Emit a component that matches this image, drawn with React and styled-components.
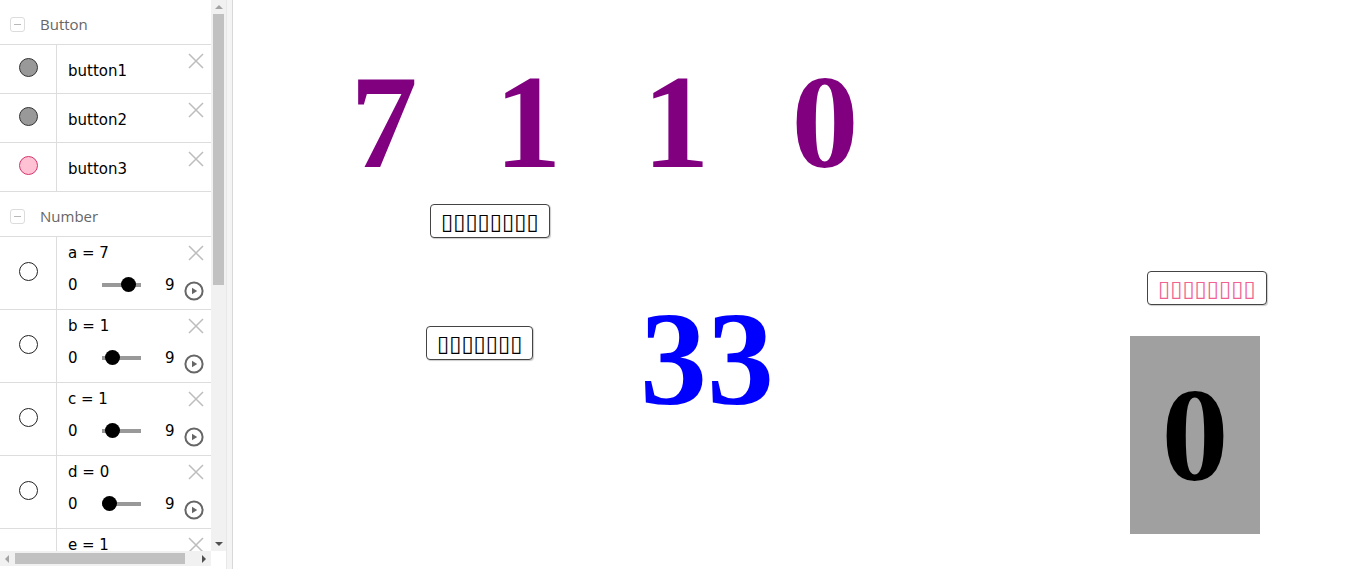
import React from 'react';
import styled, { createGlobalStyle } from 'styled-components';

const GlobalStyle = createGlobalStyle`
  html, body {
    margin: 0;
    padding: 0;
    background: #fff;
    overflow: hidden;
  }
  body {
    font-family: "DejaVu Sans", sans-serif;
    color: #000;
  }
`;

const PANEL_W = 233;

// Layout
const Page = styled.div`
  display: flex;
  width: 1352px;
  height: 569px;
`;

const Panel = styled.div`
  display: flex;
  flex: none;
  height: 100%;
`;

const ListArea = styled.div`
  display: grid;
  grid-template-columns: 211px 15px;
  grid-template-rows: 551px 15px;
  width: 226px;
`;

const ListClip = styled.div`
  overflow: hidden;
`;

const Splitter = styled.div`
  width: 5px;
  background: #f4f4f4;
  border-left: 1px solid #e8e8e8;
  border-right: 1px solid #d8d8d8;
`;

// Scrollbars
const VScroll = styled.div`
  display: flex;
  flex-direction: column;
  background: #f1f1f1;
`;

const HScroll = styled.div`
  display: flex;
  background: #f1f1f1;
`;

const Corner = styled.div`
  background: #fff;
`;

const ArrowCell = styled.div`
  flex: none;
  width: ${p => (p.$horizontal ? '14px' : '15px')};
  height: ${p => (p.$horizontal ? '15px' : '14px')};
  display: flex;
  align-items: center;
  justify-content: center;
`;

const Arrow = styled.div`
  width: 0;
  height: 0;
  border-style: solid;
  border-color: transparent;
  ${p => p.$dir === 'up' && `border-width: 0 4px 4px 4px; border-bottom-color: ${p.$color};`}
  ${p => p.$dir === 'down' && `border-width: 4px 4px 0 4px; border-top-color: ${p.$color};`}
  ${p => p.$dir === 'left' && `border-width: 4px 4px 4px 0; border-right-color: ${p.$color};`}
  ${p => p.$dir === 'right' && `border-width: 4px 0 4px 4px; border-left-color: ${p.$color};`}
`;

const VThumb = styled.div`
  flex: none;
  height: 271px;
  margin: 0 2px;
  background: #c1c1c1;
`;

const HThumb = styled.div`
  flex: none;
  width: 170px;
  margin: 2px 0 2px 1px;
  background: #c1c1c1;
`;

const Spacer = styled.div`
  flex: 1;
`;

// Algebra list
const GroupHeader = styled.div`
  box-sizing: border-box;
  display: flex;
  align-items: center;
  height: 44px;
  padding: 4px 0 0 10px;
  gap: 15px;
`;

const Collapse = styled.div`
  box-sizing: border-box;
  width: 15px;
  height: 15px;
  border: 1px solid #dcdcdc;
  border-radius: 3px;
  display: flex;
  align-items: center;
  justify-content: center;
  &::after {
    content: '';
    width: 7px;
    height: 1px;
    background: #b8b8b8;
  }
`;

const GroupTitle = styled.span`
  font-family: "Open Sans", sans-serif;
  font-size: 15px;
  color: #666;
`;

const ItemList = styled.div`
  border-bottom: 1px solid #ddd;
`;

const Item = styled.div`
  display: grid;
  grid-template-columns: 57px 1fr 31px;
  height: ${p => (p.$tall ? '72px' : '48px')};
  border-top: 1px solid #ddd;
`;

const Marker = styled.div`
  border-right: 1px solid #ddd;
  display: flex;
  align-items: center;
  justify-content: center;
  padding-bottom: 3px;
`;

const Dot = styled.div`
  box-sizing: border-box;
  width: 19px;
  height: 19px;
  border-radius: 50%;
  background: ${p => p.$fill};
  border: 1px solid ${p => p.$stroke};
`;

const Body = styled.div`
  display: flex;
  flex-direction: column;
  justify-content: ${p => (p.$tall ? 'flex-start' : 'center')};
  padding-left: 11px;
  padding-top: ${p => (p.$tall ? '1px' : '3px')};
  font-size: 15px;
`;

const Label = styled.div`
  height: 30px;
  line-height: 30px;
  white-space: nowrap;
`;

const SliderRow = styled.div`
  display: flex;
  align-items: center;
  height: 33px;
`;

const Bound = styled.span`
  width: 10px;
`;

const Track = styled.div`
  position: relative;
  width: 39px;
  height: 4px;
  margin: 0 24px;
  background: #999;
`;

const Knob = styled.div`
  position: absolute;
  top: 50%;
  width: 15px;
  height: 15px;
  margin: -7.5px 0 0 -7.5px;
  border-radius: 50%;
  background: #000;
`;

const Actions = styled.div`
  display: flex;
  flex-direction: column;
  align-items: flex-end;
  justify-content: space-between;
  padding: 8px 7px 8px 0;
`;

const CloseIcon = () => (
  <svg width="16" height="16" viewBox="0 0 16 16">
    <path d="M1 1 L15 15 M15 1 L1 15" stroke="#bdbdbd" strokeWidth="1.5" fill="none" />
  </svg>
);

const PlayIcon = () => (
  <svg width="20" height="20" viewBox="0 0 20 20">
    <circle cx="10" cy="10" r="8.6" stroke="#666" strokeWidth="2" fill="none" />
    <path d="M8 6.8 L13.2 10 L8 13.2 Z" fill="#666" />
  </svg>
);

// Graphics view
const Canvas = styled.div`
  position: relative;
  flex: 1;
  background: #fff;
  overflow: hidden;
`;

const Digit = styled.div`
  position: absolute;
  left: ${p => p.$cx - PANEL_W - 80}px;
  top: ${p => p.$top}px;
  width: 160px;
  text-align: center;
  font-family: "Liberation Serif", serif;
  font-weight: bold;
  font-size: 134px;
  line-height: 1;
  color: ${p => p.$color};
`;

const GrayBox = styled.div`
  position: absolute;
  left: ${1130 - PANEL_W}px;
  top: 336px;
  width: 130px;
  height: 198px;
  background: #a0a0a0;
  display: flex;
  align-items: center;
  justify-content: center;
  font-family: "Liberation Serif", serif;
  font-weight: bold;
  font-size: 134px;
  line-height: 1;
  color: #000;
`;

const CanvasButton = styled.div`
  position: absolute;
  left: ${p => p.$x - PANEL_W}px;
  top: ${p => p.$y}px;
  box-sizing: border-box;
  height: 34px;
  padding: 0 10px;
  display: flex;
  align-items: center;
  background: #fff;
  border: 1px solid #444;
  border-radius: 4px;
  box-shadow: 1px 1px 1px rgba(0, 0, 0, 0.2);
  font-family: "DejaVu Sans", sans-serif;
  font-size: 22px;
  letter-spacing: 0.1px;
  white-space: nowrap;
  color: ${p => p.$color || '#000'};
`;

const buttons = [
  { name: 'button1', fill: '#999', stroke: '#333' },
  { name: 'button2', fill: '#999', stroke: '#333' },
  { name: 'button3', fill: '#ffc2d4', stroke: '#d6336c' },
];

const numbers = [
  { name: 'a', value: 7 },
  { name: 'b', value: 1 },
  { name: 'c', value: 1 },
  { name: 'd', value: 0 },
  { name: 'e', value: 1 },
];

const knobLeft = v => 7.5 + (v / 9) * 24;

export default function App() {
  return (
    <Page>
      <GlobalStyle />
      <Panel>
        <ListArea>
          <ListClip>
            <GroupHeader>
              <Collapse />
              <GroupTitle>Button</GroupTitle>
            </GroupHeader>
            <ItemList>
              {buttons.map(b => (
                <Item key={b.name}>
                  <Marker>
                    <Dot $fill={b.fill} $stroke={b.stroke} />
                  </Marker>
                  <Body>{b.name}</Body>
                  <Actions>
                    <CloseIcon />
                  </Actions>
                </Item>
              ))}
            </ItemList>
            <GroupHeader>
              <Collapse />
              <GroupTitle>Number</GroupTitle>
            </GroupHeader>
            <ItemList>
              {numbers.map(n => (
                <Item key={n.name} $tall>
                  <Marker>
                    <Dot $fill="#fff" $stroke="#222" />
                  </Marker>
                  <Body $tall>
                    <Label>{n.name} = {n.value}</Label>
                    <SliderRow>
                      <Bound>0</Bound>
                      <Track>
                        <Knob style={{ left: knobLeft(n.value) }} />
                      </Track>
                      <Bound>9</Bound>
                    </SliderRow>
                  </Body>
                  <Actions>
                    <CloseIcon />
                    <PlayIcon />
                  </Actions>
                </Item>
              ))}
            </ItemList>
          </ListClip>
          <VScroll>
            <ArrowCell>
              <Arrow $dir="up" $color="#a3a3a3" />
            </ArrowCell>
            <VThumb />
            <Spacer />
            <ArrowCell>
              <Arrow $dir="down" $color="#505050" />
            </ArrowCell>
          </VScroll>
          <HScroll>
            <ArrowCell $horizontal>
              <Arrow $dir="left" $color="#a3a3a3" />
            </ArrowCell>
            <HThumb />
            <Spacer />
            <ArrowCell $horizontal>
              <Arrow $dir="right" $color="#505050" />
            </ArrowCell>
          </HScroll>
          <Corner />
        </ListArea>
        <Splitter />
      </Panel>
      <Canvas>
        <Digit $cx={384} $top={55} $color="#800080">7</Digit>
        <Digit $cx={528} $top={55} $color="#800080">1</Digit>
        <Digit $cx={676} $top={55} $color="#800080">1</Digit>
        <Digit $cx={825} $top={55} $color="#800080">0</Digit>
        <CanvasButton $x={430} $y={204}>▯▯▯▯▯▯▯▯</CanvasButton>
        <CanvasButton $x={426} $y={326}>▯▯▯▯▯▯▯</CanvasButton>
        <Digit $cx={707} $top={292} $color="#0000ff">33</Digit>
        <CanvasButton $x={1147} $y={271} $color="#f06292">▯▯▯▯▯▯▯▯</CanvasButton>
        <GrayBox>0</GrayBox>
      </Canvas>
    </Page>
  );
}
